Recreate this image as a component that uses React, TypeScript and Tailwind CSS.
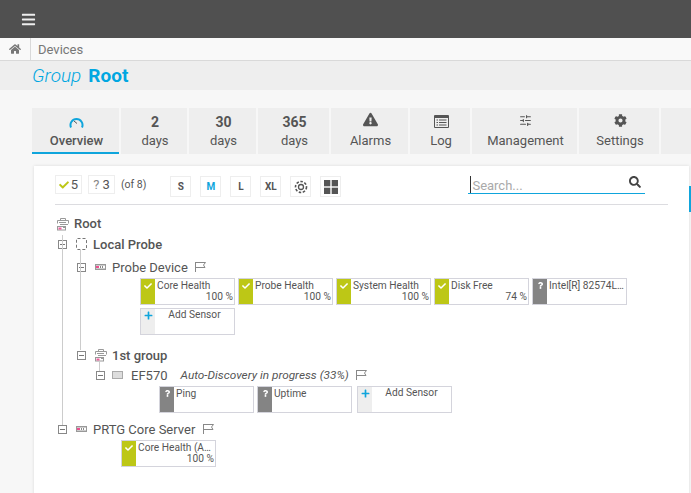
import { FaBars, FaCog, FaExclamationTriangle, FaHome, FaSearch, FaCheck, FaPlus, FaQuestion } from "react-icons/fa";
import { SlidersHorizontal } from "lucide-react";
import type { ReactNode } from "react";

function Gauge() {
  return (
    <svg width="15" height="11" viewBox="0 0 15 11" fill="none">
      <path d="M2 10.5 A6 6 0 1 1 13 10.5" stroke="#0fa5dc" strokeWidth="2" />
      <path d="M5 4 L8 6.5" stroke="#555" strokeWidth="1" />
    </svg>
  );
}

function LogIcon() {
  return (
    <svg width="15" height="13" viewBox="0 0 15 13" fill="none" className="mb-[2px]">
      <rect x="0" y="0" width="15" height="13" rx="1" fill="#555" />
      <rect x="1" y="3" width="13" height="9" fill="#eeeeee" />
      <path d="M2.5 5 H4 M5 5 H12.5 M2.5 7.5 H4 M5 7.5 H12.5 M2.5 10 H4 M5 10 H12.5" stroke="#555" />
    </svg>
  );
}

function GroupIcon() {
  return (
    <svg width="12" height="13" viewBox="0 0 12 13" fill="none" stroke="#999" strokeWidth="1">
      <path d="M3.5 2.5 V0.5 H8.5 V2.5 M0.5 5.5 V2.5 H11.5 V5.5 M2 4.5 H9" />
      <rect x="0.5" y="8.5" width="8" height="3.5" />
      <rect x="1.5" y="9.5" width="3" height="2" fill="#ee5f9c" stroke="none" />
      <path d="M6 9.5 H8 M3 6.5 H11" />
    </svg>
  );
}

function ProbeIcon() {
  return (
    <svg width="11" height="12" viewBox="0 0 11 12" fill="none" stroke="#777" strokeWidth="1" strokeDasharray="3 2">
      <rect x="0.5" y="0.5" width="10" height="11" rx="1" />
    </svg>
  );
}

function DeviceIcon({ gray }: { gray?: boolean }) {
  return gray ? (
    <svg width="11" height="8" viewBox="0 0 11 8">
      <rect x="0.5" y="0.5" width="10" height="7" fill="#ddd" stroke="#aaa" />
    </svg>
  ) : (
    <svg width="11" height="6" viewBox="0 0 11 6">
      <rect width="11" height="6" fill="#999" />
      <rect x="1" y="1.5" width="9" height="3" fill="#fff" />
      <rect x="1" y="2" width="3" height="2" fill="#ee4f90" />
      <rect x="5" y="2" width="1" height="2" fill="#888" />
      <rect x="7" y="2" width="1" height="2" fill="#888" />
    </svg>
  );
}

function Flag() {
  return (
    <svg width="11" height="10" viewBox="0 0 11 10" fill="none" stroke="#888">
      <path d="M0.5 0 V10 M0.5 0.5 H10.5 L8.5 3 L10 5.5 H0.5" />
    </svg>
  );
}

function Toggle() {
  return (
    <span className="flex h-[9px] w-[9px] shrink-0 items-center justify-center border border-[#888] bg-white">
      <span className="h-px w-[5px] bg-[#777]" />
    </span>
  );
}

type TileProps = { name: string; value?: string; state: "ok" | "unknown" };

function Tile({ name, value, state }: TileProps) {
  return (
    <div className="flex h-[27px] w-[95px] border border-[#d4d4dc] bg-white">
      <div className={`flex h-full w-[14px] shrink-0 justify-center pt-[3px] text-white ${state === "ok" ? "bg-[#bdc716]" : "bg-[#848484]"}`}>
        {state === "ok" ? <FaCheck size={8} /> : <FaQuestion size={7} />}
      </div>
      <div className="min-w-0 flex-1 pr-px pl-[2px] text-[10.2px] leading-[11px] whitespace-nowrap text-[#555]">
        <div className="pt-px">{name}</div>
        {value ? <div className="text-right">{value}</div> : null}
      </div>
    </div>
  );
}

function AddSensor() {
  return (
    <div className="flex h-[27px] w-[95px] border border-[#d4d4dc] bg-white">
      <div className="flex h-full w-[14px] shrink-0 justify-center bg-[#eeeeee] pt-[2px] text-[#0fa5dc]">
        <FaPlus size={9} />
      </div>
      <div className="flex-1 text-center text-[10.2px] leading-[11px] text-[#555]">Add Sensor</div>
    </div>
  );
}

function Row({ className, children }: { className: string; children: ReactNode }) {
  return <div className={`flex h-[20px] items-center whitespace-nowrap text-[#555] ${className}`}>{children}</div>;
}

function SizeButton({ children, active }: { children: ReactNode; active?: boolean }) {
  return (
    <div className={`flex h-[21px] w-[21px] items-center justify-center border border-[#eeeeee] bg-white text-[10px] font-bold ${active ? "text-[#0fa5dc]" : "text-[#555]"}`}>
      {children}
    </div>
  );
}

const tabs = [
  { top: <Gauge />, label: "Overview", w: "w-[87px]", active: true },
  { top: "2", label: "days", w: "w-[66px]" },
  { top: "30", label: "days", w: "w-[67px]" },
  { top: "365", label: "days", w: "w-[71px]" },
  { top: <FaExclamationTriangle size={15} className="mb-[5px]" />, label: "Alarms", w: "w-[77px]" },
  { top: <LogIcon />, label: "Log", w: "w-[60px]" },
  { top: <SlidersHorizontal size={13} className="mb-[4px]" />, label: "Management", w: "w-[105px]" },
  { top: <FaCog size={13} className="mb-[4px]" />, label: "Settings", w: "w-[80px]" },
  { top: "", label: "", w: "w-[40px]" },
];

export default function App() {
  return (
    <div className="relative h-[493px] w-[691px] overflow-hidden bg-[#f7f7f7] font-['Roboto',sans-serif] text-[#555]">
      {/* top bar */}
      <div className="flex h-[38px] items-center bg-[#505050] pl-[21px] shadow-[0_1px_3px_rgba(0,0,0,0.3)]">
        <FaBars size={15} color="#eeeeee" />
      </div>

      {/* breadcrumb */}
      <div className="flex h-[23px] items-center border-b border-[#d9d9d9] bg-[#f9f9f9]">
        <div className="flex h-full w-[31px] items-center justify-center border-r border-[#d9d9d9]">
          <FaHome size={12} color="#777" />
        </div>
        <span className="pt-[2px] pl-[7px] text-[13px] text-[#777]">Devices</span>
      </div>

      {/* title */}
      <div className="flex h-[29px] items-center gap-[7px] bg-[#eeeeee] pb-[1px] pl-[32px] text-[19px] leading-none text-[#00a7e1]">
        <span className="font-light italic">Group</span>
        <span className="font-bold">Root</span>
      </div>

      {/* tabs */}
      <div className="flex gap-[2px] pt-[18px] pl-[32px]">
        {tabs.map((tab, i) => (
          <div
            key={i}
            className={`flex h-[46px] shrink-0 flex-col items-center bg-[#eeeeee] pl-[2px] ${tab.w} ${tab.active ? "border-b-2 border-[#0fa5dc]" : ""}`}
          >
            <div className="flex h-[25px] items-center pt-[3px] text-[14px] font-bold text-[#555]">{tab.top}</div>
            <div className={`text-[13px] leading-[16px] text-[#555] ${tab.active ? "font-medium" : ""}`}>{tab.label}</div>
          </div>
        ))}
      </div>

      {/* card */}
      <div className="mt-[12px] ml-[34px] h-[340px] w-[655px] bg-white pt-[9px] shadow-[0_0_3px_rgba(0,0,0,0.12)]">
        {/* toolbar */}
        <div className="mr-[21px] ml-[21px] flex h-[30px] items-start border-b border-[#dcdce0]">
          <div className="flex h-[19px] w-[27px] items-center justify-center gap-[2px] border border-[#eeeeee] text-[13px]">
            <FaCheck size={10} color="#bdc716" />5
          </div>
          <div className="ml-[6px] flex h-[19px] w-[27px] items-center justify-center gap-[3px] border border-[#eeeeee] text-[13px]">
            <span className="text-[#888]">?</span>3
          </div>
          <span className="ml-[6px] pt-[2px] text-[10.5px]">(of 8)</span>
          <div className="ml-[24px] flex gap-[9px] pt-px">
            <SizeButton>S</SizeButton>
            <SizeButton active>M</SizeButton>
            <SizeButton>L</SizeButton>
            <SizeButton>XL</SizeButton>
            <SizeButton>
              <svg width="14" height="14" viewBox="0 0 14 14" fill="none" stroke="#555">
                <circle cx="7" cy="7" r="2.5" strokeWidth="1.3" />
                <circle cx="7" cy="7" r="5.5" strokeWidth="1.6" strokeDasharray="2.5 1.6" />
              </svg>
            </SizeButton>
            <SizeButton>
              <svg width="14" height="14" viewBox="0 0 14 14" fill="#555">
                <rect width="6.3" height="6.3" />
                <rect x="7.7" width="6.3" height="6.3" />
                <rect y="7.7" width="6.3" height="6.3" />
                <rect x="7.7" y="7.7" width="6.3" height="6.3" />
              </svg>
            </SizeButton>
          </div>
          <div className="ml-[127px] flex h-[19px] w-[177px] items-center justify-between border-b border-[#0fa5dc] pr-[4px] pl-[2px] text-[13px] text-[#aaa]">
            <span className="border-l border-[#333] pt-[2px] pl-px leading-[15px]">Search...</span>
            <FaSearch size={12} color="#444" className="mb-[4px]" />
          </div>
        </div>

        {/* tree */}
        <div className="relative mt-[9px] text-[13px]">
          <div className="absolute top-[21px] left-[28px] h-[190px] w-px bg-[#cccccc]" />
          <div className="absolute top-[36px] left-[46px] h-[100px] w-px bg-[#cccccc]" />
          <div className="absolute top-[147px] left-[65px] h-[10px] w-px bg-[#cccccc]" />

          <Row className="ml-[23px] font-medium">
            <GroupIcon />
            <span className="ml-[5px]">Root</span>
          </Row>
          <Row className="ml-[24px] font-medium">
            <Toggle />
            <span className="ml-[9px]"><ProbeIcon /></span>
            <span className="ml-[6px] pt-[2px]">Local Probe</span>
          </Row>
          <Row className="mt-[3px] ml-[43px]">
            <Toggle />
            <span className="ml-[9px]"><DeviceIcon /></span>
            <span className="ml-[6px] pt-[2px]">Probe Device</span>
            <span className="ml-[7px]"><Flag /></span>
          </Row>
          <div className="mt-px ml-[106px] flex w-[500px] flex-wrap gap-[3px]">
            <Tile name="Core Health" value="100 %" state="ok" />
            <Tile name="Probe Health" value="100 %" state="ok" />
            <Tile name="System Health" value="100 %" state="ok" />
            <Tile name="Disk Free" value="74 %" state="ok" />
            <Tile name="Intel[R] 82574L…" state="unknown" />
            <AddSensor />
          </div>
          <Row className="mt-[10px] ml-[43px] font-medium">
            <Toggle />
            <span className="ml-[9px]"><GroupIcon /></span>
            <span className="ml-[5px] pt-[2px]">1st group</span>
          </Row>
          <Row className="ml-[62px]">
            <Toggle />
            <span className="ml-[7px]"><DeviceIcon gray /></span>
            <span className="ml-[8px] pt-[2px]">EF570</span>
            <span className="ml-[13px] pt-[2px] text-[11.8px] italic">Auto-Discovery in progress (33%)</span>
            <span className="ml-[7px]"><Flag /></span>
          </Row>
          <div className="mt-px ml-[125px] flex gap-[3px]">
            <Tile name="Ping" state="unknown" />
            <Tile name="Uptime" state="unknown" />
            <div className="ml-[2px]">
              <AddSensor />
            </div>
          </div>
          <Row className="mt-[6px] ml-[24px]">
            <Toggle />
            <span className="ml-[9px]"><DeviceIcon /></span>
            <span className="ml-[6px] pt-[2px]">PRTG Core Server</span>
            <span className="ml-[8px]"><Flag /></span>
          </Row>
          <div className="mt-px ml-[87px] flex">
            <Tile name="Core Health (A…" value="100 %" state="ok" />
          </div>
        </div>
      </div>

      {/* scroll marker */}
      <div className="absolute top-[186px] right-0 h-[26px] w-[2px] bg-[#0fa5dc]" />
    </div>
  );
}
